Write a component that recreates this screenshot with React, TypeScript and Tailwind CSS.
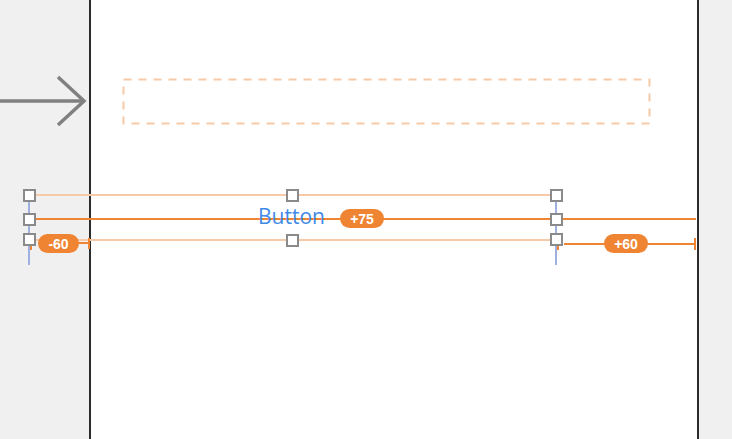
import React from "react"

const orange = "#ef8532"
const lightOrange = "#f7c9a6"
const blue = "#9db0e0"

function Handle({ x, y }: { x: number; y: number }) {
  return (
    <div
      className="absolute h-[13px] w-[13px] border-2 border-[#8a8a8a] bg-white"
      style={{ left: x - 6, top: y - 6 }}
    />
  )
}

function Badge({ x, y, w, text }: { x: number; y: number; w: number; text: string }) {
  return (
    <div
      className="absolute flex h-[19px] items-center justify-center rounded-full bg-[#ef8532] text-[14px] font-bold leading-none text-white"
      style={{ left: x, top: y, width: w, fontFamily: "'Helvetica', 'Liberation Sans', sans-serif" }}
    >
      {text}
    </div>
  )
}

export default function App() {
  return (
    <div className="relative h-[439px] w-[732px] overflow-hidden bg-[#f0f0f0]">
      <div className="flex h-full">
        <div className="w-[89px]" />
        <div className="w-[610px] border-x-2 border-[#2b2b2b] bg-white" />
        <div className="flex-1" />
      </div>

      <svg className="absolute left-0 top-0" width={732} height={439}>
        {/* segue arrow */}
        <line x1={0} y1={101} x2={83} y2={101} stroke="#808080" strokeWidth={3.5} />
        <polyline points="58,77 84,101 58,125" fill="none" stroke="#808080" strokeWidth={3.5} />

        {/* dashed placeholder */}
        <rect x={123.5} y={79.5} width={526} height={44} fill="none" stroke={lightOrange} strokeWidth={2} strokeDasharray="8 7" />

        {/* blue guides */}
        <line x1={29} y1={195} x2={29} y2={265} stroke={blue} strokeWidth={2} />
        <line x1={556} y1={195} x2={556} y2={265} stroke={blue} strokeWidth={2} />

        {/* constraint lines */}
        <line x1={29} y1={195} x2={556} y2={195} stroke={lightOrange} strokeWidth={2} />
        <line x1={29} y1={240} x2={556} y2={240} stroke={lightOrange} strokeWidth={2} />
        <line x1={29} y1={219} x2={696} y2={219} stroke={orange} strokeWidth={2} />

        {/* -60 */}
        <line x1={31} y1={244} x2={31} y2={250} stroke={orange} strokeWidth={2} />
        <line x1={78} y1={243} x2={90} y2={243} stroke={orange} strokeWidth={2} />
        <line x1={89} y1={238} x2={89} y2={249} stroke={orange} strokeWidth={2} />

        {/* +60 */}
        <line x1={558} y1={244} x2={558} y2={250} stroke={orange} strokeWidth={2} />
        <line x1={564} y1={244} x2={695} y2={244} stroke={orange} strokeWidth={2} />
        <line x1={695} y1={238} x2={695} y2={250} stroke={orange} strokeWidth={2} />
      </svg>

      <Handle x={29} y={195} />
      <Handle x={29} y={219} />
      <Handle x={29} y={239} />
      <Handle x={292} y={195} />
      <Handle x={292} y={240} />
      <Handle x={556} y={195} />
      <Handle x={556} y={219} />
      <Handle x={556} y={239} />

      <div
        className="absolute text-[21px] leading-none text-[#3f8ae6]"
        style={{ left: 258, top: 206, fontFamily: "'Open Sans', 'Liberation Sans', sans-serif" }}
      >
        Button
      </div>

      <Badge x={38} y={234} w={41} text="-60" />
      <Badge x={340} y={209} w={44} text="+75" />
      <Badge x={604} y={234} w={44} text="+60" />
    </div>
  )
}
